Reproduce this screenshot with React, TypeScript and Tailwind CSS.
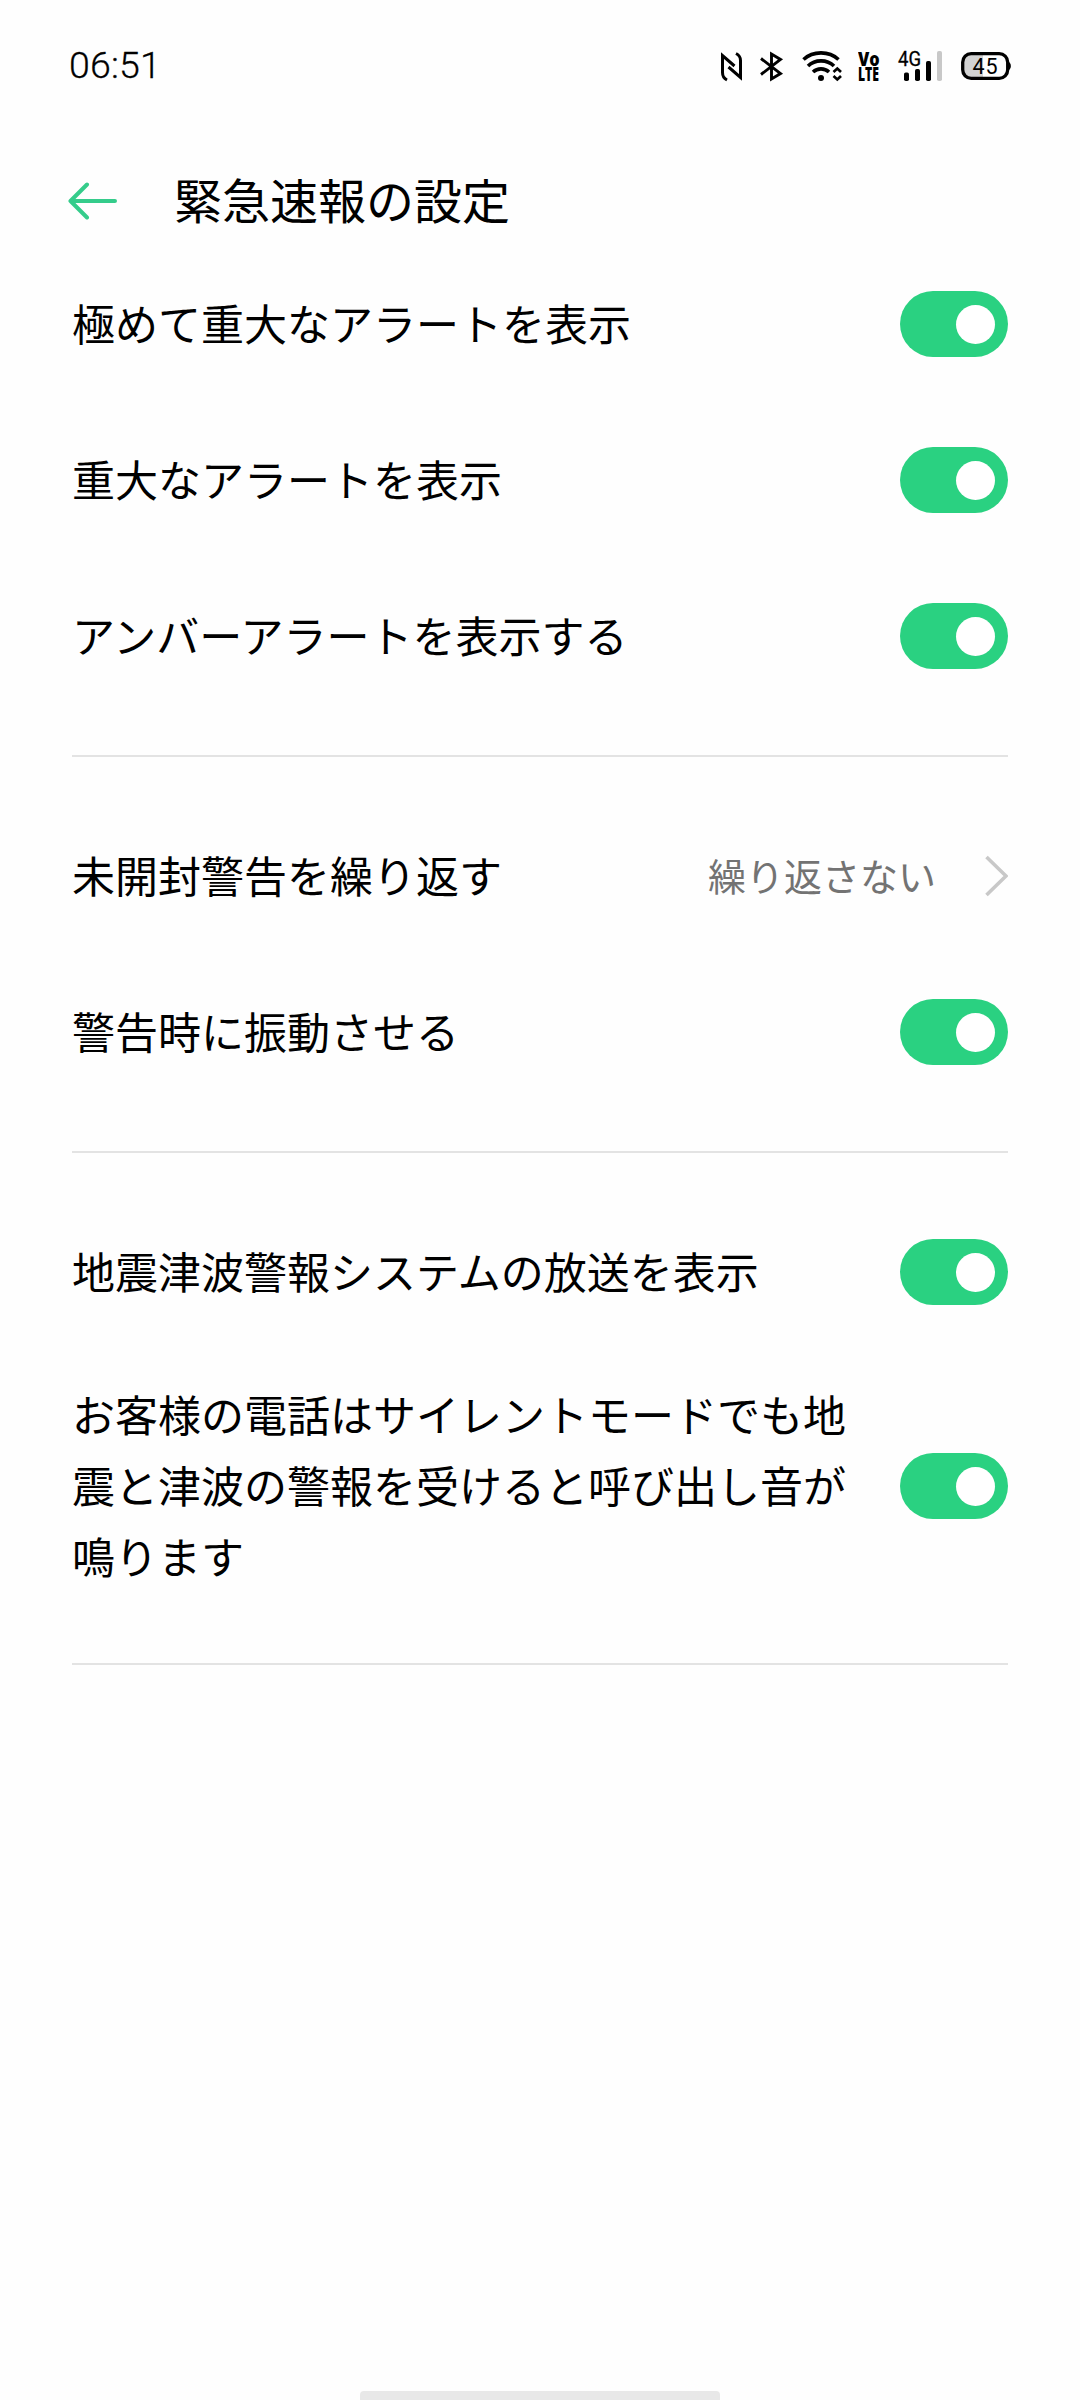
import { useState } from "react";
import clsx from "clsx";

interface ToggleItem {
  id: string;
  label: string;
  value?: string;
}

const groups: ToggleItem[][] = [
  [
    { id: "extreme", label: "極めて重大なアラートを表示" },
    { id: "severe", label: "重大なアラートを表示" },
    { id: "amber", label: "アンバーアラートを表示する" },
  ],
  [
    { id: "repeat", label: "未開封警告を繰り返す", value: "繰り返さない" },
    { id: "vibrate", label: "警告時に振動させる" },
  ],
  [
    { id: "etws", label: "地震津波警報システムの放送を表示" },
    { id: "silent", label: "お客様の電話はサイレントモードでも地震と津波の警報を受けると呼び出し音が鳴ります" },
  ],
];

function StatusBar() {
  return (
    <div className="flex h-[132px] items-center justify-between pl-[69px] pr-[66px]">
      <span className="font-['Roboto',sans-serif] text-[37.5px] font-light leading-none tracking-[0.2px] [-webkit-text-stroke:0.3px_black]">06:51</span>

      <div className="flex items-center">
        {/* NFC */}
        <svg width="36" height="36" viewBox="0 0 36 36" fill="none" stroke="currentColor" strokeWidth="3">
          <path d="M11 32C8 30.500 6.500 28 6.500 24.500V7.500L18.500 18" />
          <path d="M20 5.500C23 7 24.500 9 24.500 12.500V29.500L12.500 19" />
        </svg>
        {/* Bluetooth */}
        <svg width="40" height="36" viewBox="0 0 40 36" fill="none" stroke="currentColor" strokeWidth="2.9">
          <path d="M9 10.500L28.500 25.500L19.500 31V6L28.500 11.500L9 26.500" />
        </svg>
        {/* Wi-Fi */}
        <svg width="58" height="36" viewBox="0 0 58 36" fill="none" stroke="currentColor" strokeWidth="3.600">
          <path d="M11.500 11.500C21 2.700 37 2.700 46.500 11.500" />
          <path d="M16 18C23 11.200 35 11.200 42 18" />
          <path d="M21 24C25.500 19.800 32.500 19.800 37 24" />
          <circle cx="29" cy="30" r="3" fill="currentColor" stroke="none" />
          <path d="M41.500 24L45.300 20.500L49 24M41.500 28L45.300 31.500L49 28" strokeWidth="2.700" />
        </svg>
        {/* VoLTE */}
        <div className="flex h-[36px] w-[38px] flex-col pl-[8px] pt-[3px] font-['Open_Sans',sans-serif] text-[18.5px] font-extrabold leading-[15px]">
          <span className="h-[15px] origin-left scale-x-[0.88]">Vo</span>
          <span className="h-[15px] origin-left scale-x-[0.66]">LTE</span>
        </div>
        {/* Mobile signal */}
        <svg width="62" height="36" viewBox="0 0 62 36" fill="currentColor" className="overflow-visible font-['Roboto',sans-serif]">
          <text x="10" y="17.700" fontSize="19.500" stroke="currentColor" strokeWidth="0.300" textLength="23" lengthAdjust="spacingAndGlyphs">4G</text>
          <rect x="16" y="24.500" width="5" height="8.500" rx="1.800" />
          <rect x="27" y="21" width="5" height="12" rx="1.800" />
          <rect x="38" y="13" width="5" height="20" rx="1.800" />
          <rect x="49" y="3" width="5" height="30" rx="1.800" fill="#c8c8c8" />
        </svg>
        {/* Battery */}
        <svg width="64" height="36" viewBox="0 0 64 36">
          <path d="M33 5H20C14 5 12 8 12 13V23C12 28 14 31 20 31H33Z" fill="#d2d2d2" />
          <rect x="12.700" y="5.700" width="45" height="24.600" rx="8.500" fill="none" stroke="currentColor" strokeWidth="3.300" />
          <path d="M58 13.500C61.800 14.500 61.800 21.500 58 22.500Z" fill="currentColor" />
          <text x="22.500" y="25.600" fontSize="21.500" fill="currentColor" textLength="25" className="font-['Roboto',sans-serif]">45</text>
        </svg>
      </div>
    </div>
  );
}

function Toggle({ checked, label, onChange }: { checked: boolean; label: string; onChange: () => void }) {
  return (
    <button
      role="switch"
      aria-checked={checked}
      aria-label={label}
      onClick={onChange}
      className={clsx(
        "flex h-[66px] w-[108px] shrink-0 cursor-pointer items-center rounded-full px-[13px] transition-colors",
        checked ? "justify-end bg-[#2ad181]" : "justify-start bg-gray-300"
      )}
    >
      <span className="size-[39px] rounded-full bg-white" />
    </button>
  );
}

export default function App() {
  const [off, setOff] = useState<string[]>([]);

  const toggle = (id: string) => {
    setOff((prev) => (prev.includes(id) ? prev.filter((i) => i !== id) : [...prev, id]));
  };

  return (
    <div lang="ja" className="flex h-[2400px] w-[1080px] flex-col overflow-hidden bg-[#fefefe] font-['Noto_Sans_CJK_JP',sans-serif] text-black">
      <StatusBar />

      <header className="flex h-[114px] items-center pl-[68px] pt-[23px]">
        <button className="cursor-pointer text-[#35cc8b]">
          <svg width="50" height="40" viewBox="0 0 50 40" fill="none" stroke="currentColor" strokeWidth="4" strokeLinecap="round" strokeLinejoin="round">
            <path d="M19 3.500L2.500 20L19 36.500M2.500 20H47" />
          </svg>
        </button>
        <h1 className="ml-[56px] pb-[6px] text-[48px] leading-none">緊急速報の設定</h1>
      </header>

      <main className="px-[72px]">
        {groups.map((group, index) => (
          <section key={index} className="mb-[41px] border-b-2 border-[#e3e3e3] pb-[41px]">
            {group.map((item) => (
              <div key={item.id} className="flex min-h-[156px] items-center justify-between py-[28px]">
                <span className="max-w-[790px] pb-[3px] text-[43px] leading-[71px]">{item.label}</span>
                {item.value ? (
                  <div className="flex items-center">
                    <span className="pb-[3px] text-[38px] leading-none text-[#737373]">{item.value}</span>
                    <svg width="26" height="44" viewBox="0 0 26 44" fill="none" stroke="#c8c8c8" strokeWidth="3.600" className="ml-[46px]">
                      <path d="M4.500 3L24 22L4.500 41" />
                    </svg>
                  </div>
                ) : (
                  <Toggle checked={!off.includes(item.id)} label={item.label} onChange={() => toggle(item.id)} />
                )}
              </div>
            ))}
          </section>
        ))}
      </main>

      {/* Gesture bar */}
      <div className="mx-auto mt-auto h-[9px] w-[360px] rounded-t-[4px] bg-[#e8e8e8]" />
    </div>
  );
}
